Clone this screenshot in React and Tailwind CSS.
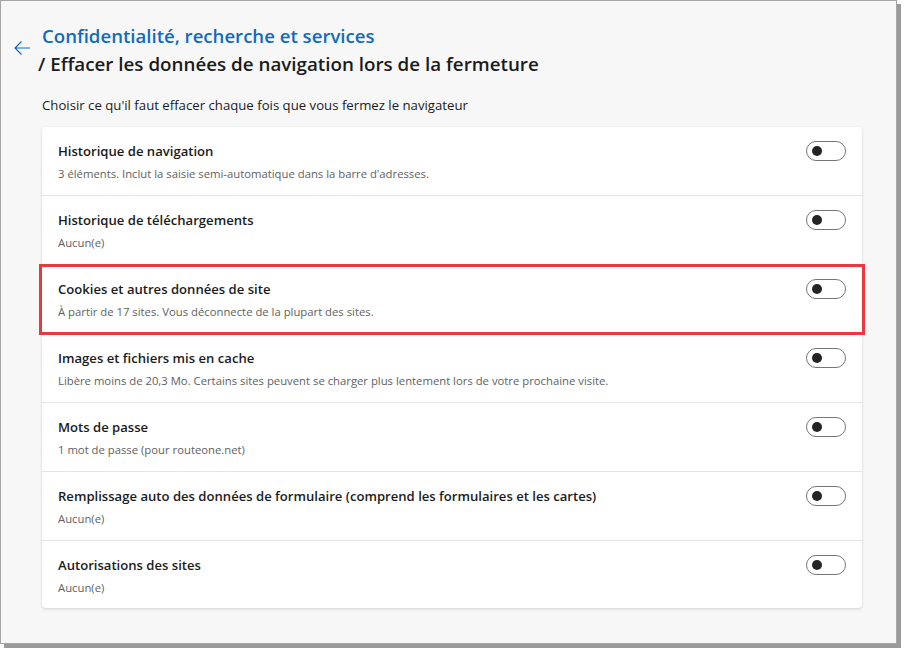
import React from 'react';

const ROWS = [
  { title: 'Historique de navigation', sub: "3 éléments. Inclut la saisie semi-automatique dans la barre d'adresses." },
  { title: 'Historique de téléchargements', sub: 'Aucun(e)' },
  { title: 'Cookies et autres données de site', sub: 'À partir de 17 sites. Vous déconnecte de la plupart des sites.', highlight: true },
  { title: 'Images et fichiers mis en cache', sub: 'Libère moins de 20,3 Mo. Certains sites peuvent se charger plus lentement lors de votre prochaine visite.' },
  { title: 'Mots de passe', sub: '1 mot de passe (pour routeone.net)' },
  { title: 'Remplissage auto des données de formulaire (comprend les formulaires et les cartes)', sub: 'Aucun(e)' },
  { title: 'Autorisations des sites', sub: 'Aucun(e)' },
];

function Toggle() {
  return (
    <div className="w-[40px] h-[20px] rounded-full border border-[#767676] bg-white flex items-center pl-[5px] shrink-0">
      <div className="w-[10px] h-[10px] rounded-full bg-[#242424]" />
    </div>
  );
}

function Row({ title, sub, highlight, last }) {
  return (
    <div className={`relative flex items-start justify-between pl-[16px] pr-[16px] pt-[14px] ${last ? 'h-[67px]' : 'h-[69px] border-b border-[#e5e5e5]'}`}>
      {highlight && (
        <div className="absolute left-[-3px] right-[-3px] top-[-1px] bottom-[-2px] border-[3px] border-[#e8393f] pointer-events-none" />
      )}
      <div className="flex flex-col">
        <span className="text-[13.1px] leading-[20px] font-semibold text-[#1b1b1b]">{title}</span>
        <span className="text-[11.3px] leading-[16px] mt-[5px] text-[#616161]">{sub}</span>
      </div>
      <Toggle />
    </div>
  );
}

export default function App() {
  return (
    <div className="w-[904px] h-[650px] bg-white" style={{ fontFamily: '"Segoe UI", "Open Sans", sans-serif' }}>
      <div className="w-[897px] h-[644px] bg-[#f7f7f7] border border-[#a6a6a6] shadow-[4px_4px_0_#9a9a9a]">
        <div className="flex pt-[21px]">
          <div className="w-[41px] flex justify-center pt-[18px]">
            <svg width="18" height="16" viewBox="0 0 18 16" fill="none" stroke="#0f6cbd" strokeWidth="1.2">
              <path d="M17 8H2M8.5 1.5L2 8l6.5 6.5" />
            </svg>
          </div>
          <div className="flex flex-col">
            <span className="text-[18.6px] leading-[28px] font-semibold text-[#0f6cbd]">Confidentialité, recherche et services</span>
            <span className="text-[18.8px] leading-[28px] font-semibold text-[#1b1b1b] -ml-[4px]">/ Effacer les données de navigation lors de la fermeture</span>
          </div>
        </div>
        <p className="ml-[41px] mt-[17px] text-[13.2px] leading-[20px] text-[#1b1b1b]">
          Choisir ce qu'il faut effacer chaque fois que vous fermez le navigateur
        </p>
        <div className="ml-[41px] mt-[12px] w-[820px] bg-white rounded-[4px] shadow-[0_1px_3px_rgba(0,0,0,0.15)]">
          {ROWS.map((r, i) => (
            <Row key={i} {...r} last={i === ROWS.length - 1} />
          ))}
        </div>
      </div>
    </div>
  );
}
